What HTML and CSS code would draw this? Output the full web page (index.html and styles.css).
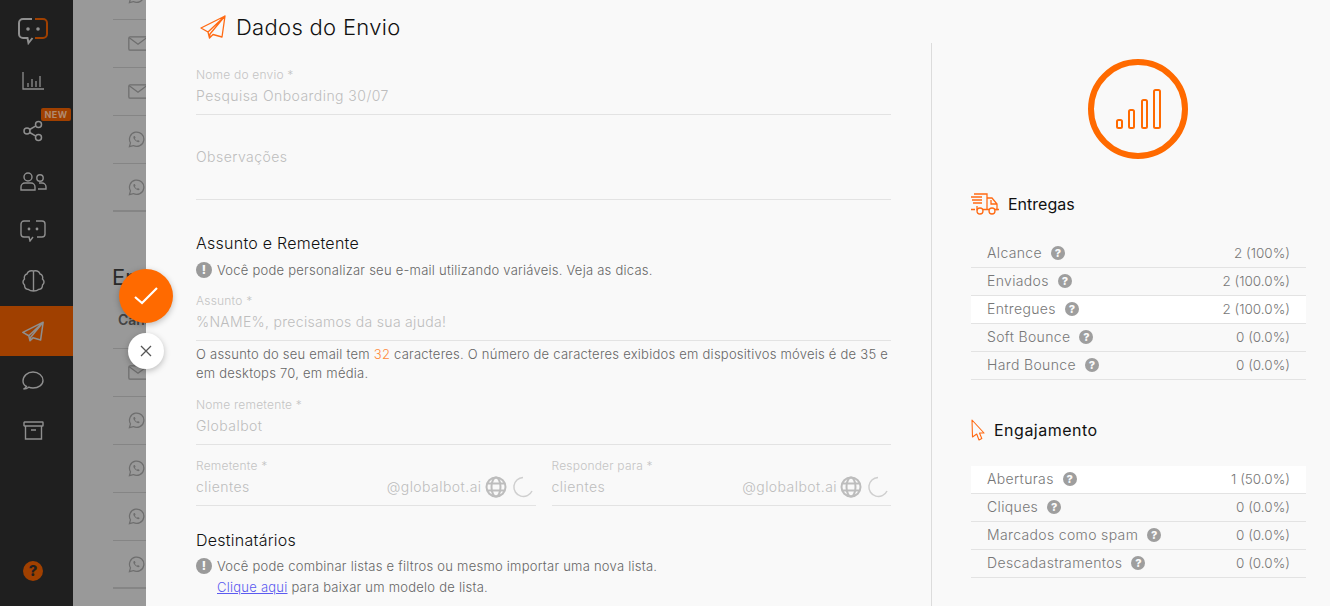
FILE: index.html
```html
<!DOCTYPE html>
<html lang="pt-BR">
<head>
    <meta charset="UTF-8">
    <title>Dados do Envio</title>
    <link rel="stylesheet" href="styles.css">
</head>
<body>
<svg class="defs" width="0" height="0">
    <symbol id="i-mail" viewBox="0 0 24 18"><rect x="1" y="1" width="22" height="16" rx="1.5" fill="none" stroke="currentColor" stroke-width="1.5"/><path d="M1.500 2l10.500 8 10.500-8" fill="none" stroke="currentColor" stroke-width="1.5"/></symbol>
    <symbol id="i-wa" viewBox="0 0 18 18"><path d="M1.500 16.500l1.100-4A7.600 7.600 0 1 1 5.600 15.400z" fill="none" stroke="currentColor" stroke-width="1.300"/><path d="M6.300 5.300c-1 .8-.8 2.200.4 3.800s2.800 2.900 4.300 2.700c.8-.1 1.300-.7 1.300-1.300l-1.800-.9-.8.800c-1-.4-2-1.500-2.400-2.500l.7-.8-.8-1.800z" fill="currentColor"/></symbol>
</svg>

<nav class="sidebar">
    <div class="side-item">
        <svg width="32" height="28" viewBox="0 0 32 28" fill="none" stroke-width="2"><path d="M15 2H6a4 4 0 0 0-4 4v11a4 4 0 0 0 4 4h4.500l1 5 4-5" stroke="#8f8f8f"/><path d="M18 2h8a4 4 0 0 1 4 4v11a4 4 0 0 1-4 4h-8" stroke="#a04000"/><circle cx="11" cy="12" r="1.800" fill="#8f8f8f" stroke="none"/><circle cx="21" cy="12" r="1.800" fill="#8f8f8f" stroke="none"/></svg>
    </div>
    <div class="side-item">
        <svg width="22" height="18" viewBox="0 0 22 18" fill="none" stroke="#8f8f8f" stroke-width="1.300"><path d="M1 0v17h21M6 15v-4M10 15V7M14 15V9M18 15V4"/></svg>
    </div>
    <div class="side-item">
        <svg width="20" height="22" viewBox="0 0 20 22" fill="none" stroke="#8f8f8f" stroke-width="1.500"><circle cx="4" cy="11" r="3"/><circle cx="15.500" cy="4.500" r="3"/><circle cx="15.500" cy="17.500" r="3"/><path d="M6.700 9.500l6.200-3.600M6.700 12.500l6.200 3.600"/></svg>
        <span class="new-badge">NEW</span>
    </div>
    <div class="side-item">
        <svg width="27" height="19" viewBox="0 0 27 19" fill="none" stroke="#8f8f8f" stroke-width="1.400"><circle cx="8" cy="5" r="4"/><path d="M1 18v-3a4 4 0 0 1 4-4h6a4 4 0 0 1 4 4v3z"/><circle cx="20" cy="6" r="3.200"/><path d="M18 17h8v-2a4 4 0 0 0-4-4h-3"/></svg>
    </div>
    <div class="side-item">
        <svg width="26" height="22" viewBox="0 0 26 22" fill="none" stroke="#8f8f8f" stroke-width="1.400"><path d="M10 1H4a3 3 0 0 0-3 3v10a3 3 0 0 0 3 3h5l1 4 3-4M16 1h6a3 3 0 0 1 3 3v10a3 3 0 0 1-3 3h-5"/><circle cx="9" cy="9" r="1.400" fill="#8f8f8f" stroke="none"/><circle cx="17" cy="9" r="1.400" fill="#8f8f8f" stroke="none"/></svg>
    </div>
    <div class="side-item">
        <svg width="23" height="22" viewBox="0 0 23 22" fill="none" stroke="#8f8f8f" stroke-width="1.400"><path d="M11.500 1v20M11.500 1C9 .5 6 1 5 4 2.500 4.500 2 7 2.500 9 .5 11 .5 13 2.500 15c0 3 2 4.500 4 4.500 1.500 1.500 3.500 1.500 5 1.500M11.500 1c2.500-.5 5.500 0 6.500 3 2.500.5 3 3 2.500 5 2 2 2 4 0 6 0 3-2 4.500-4 4.500-1.500 1.500-3.500 1.500-5 1.500"/></svg>
    </div>
    <div class="side-item active">
        <svg width="22" height="21" viewBox="0 0 26 24" fill="none" stroke="#8f8f8f" stroke-width="1.800" stroke-linejoin="round"><path d="M25 1L1 13l7 4 1.500 6 3.500-3.500 9 2.500zM25 1L8 17M25 1L10 19l-.5 4"/></svg>
    </div>
    <div class="side-item">
        <svg width="22" height="19" viewBox="0 0 22 19" fill="none" stroke="#8f8f8f" stroke-width="1.400"><path d="M1.500 18c1.500-.5 2.500-1.500 3-2.500C2.500 14.500 1 12.500 1 10 1 5 5.500 1 11 1s10 4 10 8.500S16.500 17 11 17c-1.500 0-3-.2-4.200-.8-1.500 1.200-3.300 1.800-5.300 1.800z"/></svg>
    </div>
    <div class="side-item">
        <svg width="21" height="19" viewBox="0 0 21 19" fill="none" stroke="#8f8f8f" stroke-width="1.400"><rect x="1" y="1" width="19" height="4" rx=".5"/><path d="M2.500 5v13h16V5M8 9h5"/></svg>
    </div>
    <div class="side-item side-bottom"><span class="side-help">?</span></div>
</nav>

<div class="behind">
    <div class="behind-row behind-first"><svg class="behind-icon" width="17" height="17"><use href="#i-wa"/></svg></div>
    <div class="behind-row"><svg class="behind-icon" width="20" height="15"><use href="#i-mail"/></svg></div>
    <div class="behind-row"><svg class="behind-icon" width="20" height="15"><use href="#i-mail"/></svg></div>
    <div class="behind-row"><svg class="behind-icon" width="17" height="17"><use href="#i-wa"/></svg></div>
    <div class="behind-row behind-last"><svg class="behind-icon" width="17" height="17"><use href="#i-wa"/></svg></div>
    <div class="behind-title">En</div>
    <div class="behind-head">Canal</div>
    <div class="behind-row"><svg class="behind-icon" width="20" height="15"><use href="#i-mail"/></svg></div>
    <div class="behind-row"><svg class="behind-icon" width="17" height="17"><use href="#i-wa"/></svg></div>
    <div class="behind-row"><svg class="behind-icon" width="17" height="17"><use href="#i-wa"/></svg></div>
    <div class="behind-row"><svg class="behind-icon" width="17" height="17"><use href="#i-wa"/></svg></div>
    <div class="behind-row behind-last"><svg class="behind-icon" width="17" height="17"><use href="#i-wa"/></svg></div>
</div>

<div class="drawer">
    <main class="form-col">
        <h1 class="page-title">
            <svg width="26" height="24" viewBox="0 0 26 24" fill="none" stroke="#ff6a13" stroke-width="1.300" stroke-linejoin="round"><path d="M25 1L1 13l7 4 1.500 6 3.500-3.500 9 2.500zM25 1L8 17M25 1L10 19l-.5 4"/></svg>
            Dados do Envio
        </h1>

        <div class="field first-field">
            <div class="field-label">Nome do envio *</div>
            <div class="field-value">Pesquisa Onboarding 30/07</div>
        </div>
        <div class="field field-area">
            <div class="field-value">Observações</div>
        </div>

        <h2 class="section-title">Assunto e Remetente</h2>
        <p class="note"><span class="note-icon">!</span>Você pode personalizar seu e-mail utilizando variáveis. Veja as dicas.</p>

        <div class="field subject-field">
            <div class="field-label">Assunto *</div>
            <div class="field-value">%NAME%, precisamos da sua ajuda!</div>
        </div>
        <p class="hint">O assunto do seu email tem <span class="count">32</span> caracteres. O número de caracteres exibidos em dispositivos móveis é de 35 e em desktops 70, em média.</p>

        <div class="field sender-field">
            <div class="field-label">Nome remetente *</div>
            <div class="field-value">Globalbot</div>
        </div>

        <div class="field-pair">
            <div class="field">
                <div class="field-label">Remetente *</div>
                <div class="field-value field-domain">
                    <span class="grow">clientes</span><span>@globalbot.ai</span>
                    <svg class="globe" width="22" height="22" viewBox="0 0 22 22" fill="none" stroke="#bdbdbd" stroke-width="2"><circle cx="11" cy="11" r="9.500"/><ellipse cx="11" cy="11" rx="4.500" ry="9.500"/><path d="M2 7.500h18M2 14.500h18"/></svg>
                    <svg class="spin" width="22" height="22" viewBox="0 0 22 22" fill="none" stroke="#cfcfcf" stroke-width="1.500"><path d="M11 1.500A9.500 9.500 0 1 0 20 15"/></svg>
                </div>
            </div>
            <div class="field">
                <div class="field-label">Responder para *</div>
                <div class="field-value field-domain">
                    <span class="grow">clientes</span><span>@globalbot.ai</span>
                    <svg class="globe" width="22" height="22" viewBox="0 0 22 22" fill="none" stroke="#bdbdbd" stroke-width="2"><circle cx="11" cy="11" r="9.500"/><ellipse cx="11" cy="11" rx="4.500" ry="9.500"/><path d="M2 7.500h18M2 14.500h18"/></svg>
                    <svg class="spin" width="22" height="22" viewBox="0 0 22 22" fill="none" stroke="#cfcfcf" stroke-width="1.500"><path d="M11 1.500A9.500 9.500 0 1 0 20 15"/></svg>
                </div>
            </div>
        </div>

        <h2 class="section-title dest-title">Destinatários</h2>
        <p class="note note-dest"><span class="note-icon">!</span>Você pode combinar listas e filtros ou mesmo importar uma nova lista.</p>
        <p class="note note-sub"><a href="#">Clique aqui</a> para baixar um modelo de lista.</p>
    </main>

    <aside class="stats-col">
        <div class="score">
            <svg width="100" height="100" viewBox="0 0 100 100" fill="none" stroke="#ff6a00"><circle cx="50" cy="50" r="47" stroke-width="6"/><g stroke-width="2"><rect x="29" y="61" width="5" height="8" rx="1.500"/><rect x="41" y="51" width="5" height="18" rx="1.500"/><rect x="54" y="41" width="5" height="28" rx="1.500"/><rect x="66" y="31" width="6" height="38" rx="1.500"/></g></svg>
        </div>

        <h3 class="stats-title">
            <svg class="truck" width="28" height="22" viewBox="0 0 28 22" fill="none" stroke="#ff6a13" stroke-width="1.300"><path d="M3 1h13v15M16 5h5l5 6v5.500h-3M12 16.500h6M6 13v3.500h1M0 4h11M1 7h10M2 10h9M20 7v4h6"/><circle cx="9" cy="18" r="3"/><circle cx="21" cy="18" r="3"/><path d="M0 16.500h4M25 16.500h3"/></svg>
            Entregas
        </h3>
        <div class="stats-table">
            <div class="stat-row"><span>Alcance</span><span class="help">?</span><span class="stat-value">2 (100%)</span></div>
            <div class="stat-row"><span>Enviados</span><span class="help">?</span><span class="stat-value">2 (100.0%)</span></div>
            <div class="stat-row white"><span>Entregues</span><span class="help">?</span><span class="stat-value">2 (100.0%)</span></div>
            <div class="stat-row"><span>Soft Bounce</span><span class="help">?</span><span class="stat-value">0 (0.0%)</span></div>
            <div class="stat-row"><span>Hard Bounce</span><span class="help">?</span><span class="stat-value">0 (0.0%)</span></div>
        </div>

        <h3 class="stats-title engage-title">
            <svg class="cursor" width="14" height="22" viewBox="0 0 14 22" fill="none" stroke="#ff6a13" stroke-width="1.100" stroke-linejoin="round"><path d="M1 1l12 13H8.500l2.300 5.500-2.800 1.500-2.300-6L1.500 18z"/></svg>
            Engajamento
        </h3>
        <div class="stats-table">
            <div class="stat-row white"><span>Aberturas</span><span class="help">?</span><span class="stat-value">1 (50.0%)</span></div>
            <div class="stat-row"><span>Cliques</span><span class="help">?</span><span class="stat-value">0 (0.0%)</span></div>
            <div class="stat-row"><span>Marcados como spam</span><span class="help">?</span><span class="stat-value">0 (0.0%)</span></div>
            <div class="stat-row"><span>Descadastramentos</span><span class="help">?</span><span class="stat-value">0 (0.0%)</span></div>
        </div>
    </aside>
</div>

<button class="fab fab-ok">
    <svg width="24" height="18" viewBox="0 0 24 18" fill="none" stroke="#fff" stroke-width="2.200"><path d="M1 10l7 6L23 1"/></svg>
</button>
<button class="fab fab-close">
    <svg width="12" height="12" viewBox="0 0 12 12" fill="none" stroke="#555" stroke-width="1.300"><path d="M1 1l10 10M11 1L1 11"/></svg>
</button>
</body>
</html>
```

FILE: styles.css
```css
html, body {
    margin: 0;
    height: 606px;
    overflow: hidden;
}

body {
    display: flex;
    font-family: Inter, "Open Sans", sans-serif;
    background: #f9f9f9;
    color: #777;
}

.defs {
    position: absolute;
}

/* left menu */
.sidebar {
    width: 73px;
    flex: none;
    box-sizing: border-box;
    padding: 6px 0 10px;
    display: flex;
    flex-direction: column;
    background: #1f1f1f;
}

.side-item {
    position: relative;
    height: 50px;
    flex: none;
    box-sizing: border-box;
    padding-right: 7px;
    display: flex;
    align-items: center;
    justify-content: center;
}

.side-item.active {
    background: #a04000;
}

.side-item.active + .side-item {
    margin-top: -1px;
}

.side-bottom {
    margin-top: auto;
}

.side-help {
    width: 20px;
    height: 20px;
    border-radius: 50%;
    background: #a04000;
    color: #1f1f1f;
    font-size: 15px;
    font-weight: 800;
    line-height: 20px;
    text-align: center;
}

.new-badge {
    position: absolute;
    left: 41px;
    top: 2px;
    width: 30px;
    height: 13px;
    border-radius: 2px;
    background: #a04000;
    color: #b08a70;
    font-size: 9px;
    font-weight: 700;
    line-height: 13px;
    text-align: center;
    letter-spacing: .5px;
}

/* page dimmed behind the drawer */
.behind {
    width: 73px;
    flex: none;
    box-sizing: border-box;
    padding-left: 40px;
    overflow: hidden;
    background: #999;
    color: #6e6e6e;
}

.behind-row {
    width: 200px;
    height: 48px;
    box-sizing: border-box;
    border-bottom: 1px solid #858585;
    display: flex;
    align-items: center;
    padding-left: 15px;
}

.behind-first {
    height: 20px;
    align-items: flex-start;
}

.behind-first .behind-icon {
    margin-top: -13px;
}

.behind-last {
    border-bottom-width: 2px;
}

.behind-title {
    font-size: 22px;
    color: #2a2a2a;
    line-height: 30px;
    margin: 50px 0 0 -1px;
    white-space: nowrap;
}

.behind-head {
    font-size: 14px;
    font-weight: 600;
    color: #444;
    line-height: 20px;
    height: 39px;
    margin-top: 18px;
    padding-left: 5px;
    width: 200px;
    box-sizing: border-box;
    border-bottom: 1px solid #858585;
    white-space: nowrap;
}

/* drawer */
.drawer {
    flex: 1;
    min-width: 0;
    display: flex;
    background: #f9f9f9;
}

.form-col {
    width: 785px;
    flex: none;
    box-sizing: border-box;
    padding: 0 40px 0 50px;
}

.page-title {
    height: 53px;
    margin: 0 0 0 4px;
    display: flex;
    align-items: center;
    gap: 10px;
    font-size: 22px;
    font-weight: 300;
    color: #111;
    letter-spacing: .3px;
}

.field {
    border-bottom: 1px solid #e3e3e3;
    padding-bottom: 6px;
}

.first-field {
    margin-top: 13px;
}

.field-label {
    font-size: 12px;
    line-height: 18px;
    color: #c4c4c4;
    font-weight: 300;
    letter-spacing: .2px;
}

.field-value {
    font-size: 14px;
    line-height: 24px;
    color: #bdbdbd;
    font-weight: 300;
    letter-spacing: .45px;
}

.field-area {
    height: 54px;
    margin-top: 30px;
    padding: 0;
}

.section-title {
    margin: 32px 0 0;
    font-size: 16px;
    font-weight: 300;
    line-height: 22px;
    color: #111;
    letter-spacing: .25px;
}

.note {
    margin: 6px 0 0;
    font-size: 13px;
    line-height: 20px;
    font-weight: 300;
    color: #666;
    display: flex;
    align-items: center;
    letter-spacing: .24px;
}

.note-dest {
    margin-top: 5px;
}

.note-icon {
    width: 16px;
    height: 16px;
    flex: none;
    margin-right: 5px;
    border-radius: 50%;
    background: #9a9a9a;
    color: #f9f9f9;
    font-size: 12px;
    font-weight: 800;
    line-height: 16px;
    text-align: center;
}

.note-sub {
    display: block;
    margin: 1px 0 0 21px;
}

.note-sub a {
    color: #5b5bf0;
}

.subject-field {
    margin-top: 12px;
}

.subject-field .field-value {
    letter-spacing: .3px;
}

.hint {
    margin: 4px 0 0;
    font-size: 13px;
    line-height: 19px;
    font-weight: 300;
    color: #666;
    letter-spacing: .24px;
}

.count {
    color: #ff8a3c;
}

.sender-field {
    margin-top: 13px;
}

.field-pair {
    display: flex;
    gap: 16px;
    margin-top: 12px;
}

.field-pair .field {
    flex: 1;
    min-width: 0;
}

.field-domain {
    display: flex;
    align-items: center;
}

.grow {
    flex: 1;
}

.globe {
    margin-left: 3px;
}

.spin {
    margin-left: 5px;
    margin-right: 2px;
}

.dest-title {
    margin-top: 23px;
}

/* right column */
.stats-col {
    flex: 1;
    box-sizing: border-box;
    margin-top: 43px;
    padding: 16px 24px 0 39px;
    border-left: 1px solid #dcdcdc;
}

.score {
    display: flex;
    justify-content: center;
    height: 100px;
    padding-right: 1px;
}

.stats-title {
    margin: 34px 0 0;
    height: 22px;
    display: flex;
    align-items: center;
    gap: 9px;
    font-size: 16px;
    font-weight: 400;
    color: #111;
}

.engage-title {
    margin-top: 39px;
    letter-spacing: .5px;
}

.stats-table {
    margin-top: 25px;
}

.stat-row {
    height: 28px;
    box-sizing: border-box;
    padding: 0 16px 2px;
    display: flex;
    align-items: center;
    border-bottom: 1px solid #e3e3e3;
    font-size: 14px;
    font-weight: 300;
    color: #777;
    letter-spacing: .35px;
}

.stat-row.white {
    background: #fff;
}

.help {
    width: 14px;
    height: 14px;
    margin-left: 9px;
    border-radius: 50%;
    background: #9e9e9e;
    color: #f9f9f9;
    font-size: 11px;
    font-weight: 800;
    line-height: 14px;
    text-align: center;
    letter-spacing: 0;
}

.stat-value {
    margin-left: auto;
    font-size: 13.500px;
    letter-spacing: 0;
}

/* floating buttons over the drawer edge */
.fab {
    position: absolute;
    border: 0;
    padding: 0;
    border-radius: 50%;
    display: flex;
    align-items: center;
    justify-content: center;
    box-shadow: 0 2px 6px rgba(0, 0, 0, .25);
}

.fab-ok {
    left: 119px;
    top: 269px;
    width: 54px;
    height: 54px;
    background: #ff6a00;
}

.fab-close {
    left: 128px;
    top: 333px;
    width: 36px;
    height: 36px;
    background: #fff;
}
```
